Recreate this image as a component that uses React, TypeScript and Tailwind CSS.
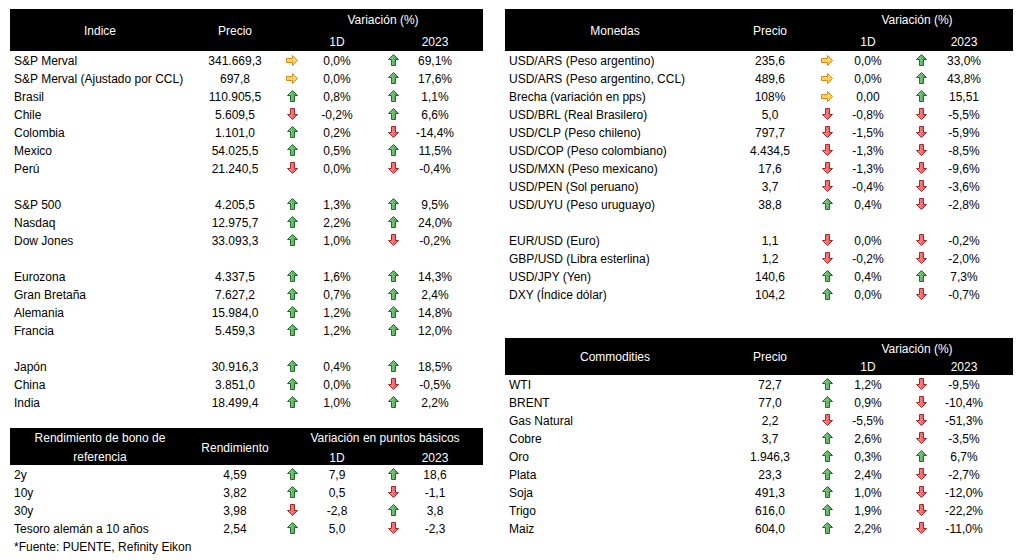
import React from 'react';

type Dir = 'up' | 'down' | 'flat';
type Row = [string, string, Dir, string, Dir, string] | null;

const LEFT_COLS = 'grid-cols-[180px_90px_24px_66px_46px_38px_29px]';
const RIGHT_COLS = 'grid-cols-[220px_90px_24px_58px_48px_38px_30px]';

const indices: Row[] = [
  ['S&P Merval', '341.669,3', 'flat', '0,0%', 'up', '69,1%'],
  ['S&P Merval (Ajustado por CCL)', '697,8', 'flat', '0,0%', 'up', '17,6%'],
  ['Brasil', '110.905,5', 'up', '0,8%', 'up', '1,1%'],
  ['Chile', '5.609,5', 'down', '-0,2%', 'up', '6,6%'],
  ['Colombia', '1.101,0', 'up', '0,2%', 'down', '-14,4%'],
  ['Mexico', '54.025,5', 'up', '0,5%', 'up', '11,5%'],
  ['Perú', '21.240,5', 'down', '0,0%', 'down', '-0,4%'],
  null,
  ['S&P 500', '4.205,5', 'up', '1,3%', 'up', '9,5%'],
  ['Nasdaq', '12.975,7', 'up', '2,2%', 'up', '24,0%'],
  ['Dow Jones', '33.093,3', 'up', '1,0%', 'down', '-0,2%'],
  null,
  ['Eurozona', '4.337,5', 'up', '1,6%', 'up', '14,3%'],
  ['Gran Bretaña', '7.627,2', 'up', '0,7%', 'up', '2,4%'],
  ['Alemania', '15.984,0', 'up', '1,2%', 'up', '14,8%'],
  ['Francia', '5.459,3', 'up', '1,2%', 'up', '12,0%'],
  null,
  ['Japón', '30.916,3', 'up', '0,4%', 'up', '18,5%'],
  ['China', '3.851,0', 'up', '0,0%', 'down', '-0,5%'],
  ['India', '18.499,4', 'up', '1,0%', 'up', '2,2%'],
];

const bonos: Row[] = [
  ['2y', '4,59', 'up', '7,9', 'up', '18,6'],
  ['10y', '3,82', 'up', '0,5', 'down', '-1,1'],
  ['30y', '3,98', 'down', '-2,8', 'up', '3,8'],
  ['Tesoro alemán a 10 años', '2,54', 'up', '5,0', 'down', '-2,3'],
];

const monedas: Row[] = [
  ['USD/ARS (Peso argentino)', '235,6', 'flat', '0,0%', 'up', '33,0%'],
  ['USD/ARS (Peso argentino, CCL)', '489,6', 'flat', '0,0%', 'up', '43,8%'],
  ['Brecha (variación en pps)', '108%', 'flat', '0,00', 'up', '15,51'],
  ['USD/BRL (Real Brasilero)', '5,0', 'down', '-0,8%', 'down', '-5,5%'],
  ['USD/CLP (Peso chileno)', '797,7', 'down', '-1,5%', 'down', '-5,9%'],
  ['USD/COP (Peso colombiano)', '4.434,5', 'down', '-1,3%', 'down', '-8,5%'],
  ['USD/MXN (Peso mexicano)', '17,6', 'down', '-1,3%', 'down', '-9,6%'],
  ['USD/PEN (Sol peruano)', '3,7', 'down', '-0,4%', 'down', '-3,6%'],
  ['USD/UYU (Peso uruguayo)', '38,8', 'up', '0,4%', 'down', '-2,8%'],
  null,
  ['EUR/USD (Euro)', '1,1', 'down', '0,0%', 'down', '-0,2%'],
  ['GBP/USD (Libra esterlina)', '1,2', 'down', '-0,2%', 'down', '-2,0%'],
  ['USD/JPY (Yen)', '140,6', 'up', '0,4%', 'up', '7,3%'],
  ['DXY (Índice dólar)', '104,2', 'up', '0,0%', 'down', '-0,7%'],
];

const commodities: Row[] = [
  ['WTI', '72,7', 'up', '1,2%', 'down', '-9,5%'],
  ['BRENT', '77,0', 'up', '0,9%', 'down', '-10,4%'],
  ['Gas Natural', '2,2', 'down', '-5,5%', 'down', '-51,3%'],
  ['Cobre', '3,7', 'up', '2,6%', 'down', '-3,5%'],
  ['Oro', '1.946,3', 'up', '0,3%', 'up', '6,7%'],
  ['Plata', '23,3', 'up', '2,4%', 'down', '-2,7%'],
  ['Soja', '491,3', 'up', '1,0%', 'down', '-12,0%'],
  ['Trigo', '616,0', 'up', '1,9%', 'down', '-22,2%'],
  ['Maiz', '604,0', 'up', '2,2%', 'down', '-11,0%'],
];

// Excel-style icon set arrows
const Arrow: React.FC<{ dir: Dir }> = ({ dir }) => {
  if (dir === 'flat') {
    return (
      <svg width="12" height="11" viewBox="0 0 12 11">
        <defs>
          <linearGradient id="gy" x1="0" y1="0" x2="0" y2="1">
            <stop offset="0" stopColor="#ffe98a" />
            <stop offset="1" stopColor="#f7c23c" />
          </linearGradient>
        </defs>
        <polygon points="0.5,3.5 6.5,3.5 6.5,0.5 11.5,5.5 6.5,10.5 6.5,7.5 0.5,7.5" fill="url(#gy)" stroke="#e3891a" strokeWidth="1" />
      </svg>
    );
  }
  const up = dir === 'up';
  return (
    <svg width="11" height="12" viewBox="0 0 11 12">
      <defs>
        <linearGradient id="gg" x1="0" y1="0" x2="1" y2="0">
          <stop offset="0" stopColor="#8fdc8f" />
          <stop offset="1" stopColor="#3c9c4a" />
        </linearGradient>
        <linearGradient id="gr" x1="0" y1="0" x2="1" y2="0">
          <stop offset="0" stopColor="#ff9a9a" />
          <stop offset="1" stopColor="#e24a4a" />
        </linearGradient>
      </defs>
      {up ? (
        <polygon points="5.5,0.5 10.5,5.5 7.5,5.5 7.5,11.5 3.5,11.5 3.5,5.5 0.5,5.5" fill="url(#gg)" stroke="#236b2c" strokeWidth="1" />
      ) : (
        <polygon points="3.5,0.5 7.5,0.5 7.5,6.5 10.5,6.5 5.5,11.5 0.5,6.5 3.5,6.5" fill="url(#gr)" stroke="#a82828" strokeWidth="1" />
      )}
    </svg>
  );
};

const DataRows: React.FC<{ rows: Row[]; cols: string }> = ({ rows, cols }) => (
  <>
    {rows.map((r, i) =>
      r === null ? (
        <div key={i} className="h-[18px]" />
      ) : (
        <div key={i} className={`grid ${cols} h-[18px] items-center pt-[2px]`}>
          <div className="pl-[4px] whitespace-nowrap">{r[0]}</div>
          <div className="flex justify-center">{r[1]}</div>
          <div className="flex justify-center -mt-[2px]"><Arrow dir={r[2]} /></div>
          <div className="flex justify-center">{r[3]}</div>
          <div className="flex justify-center -mt-[2px]"><Arrow dir={r[4]} /></div>
          <div className="flex justify-center whitespace-nowrap">{r[5]}</div>
          <div />
        </div>
      )
    )}
  </>
);

export default function App() {
  return (
    <div
      className="w-[1023px] h-[560px] bg-white text-black text-[12px] leading-none flex gap-[22px] pl-[10px] pt-[9px] overflow-hidden"
      style={{ fontFamily: '"Liberation Sans", Arial, sans-serif' }}
    >
      {/* Left column */}
      <div className="w-[473px] flex flex-col">
        <div className={`grid ${LEFT_COLS} bg-black text-white h-[42px]`}>
          <div className="row-span-2 flex items-center justify-center pt-[1px]">Indice</div>
          <div className="row-span-2 flex items-center justify-center pt-[1px]">Precio</div>
          <div className="col-span-4 flex items-center justify-center pl-[32px] pt-[2px]">Variación (%)</div>
          <div className="row-span-2" />
          <div />
          <div className="flex items-center justify-center pt-[3px]">1D</div>
          <div />
          <div className="flex items-center justify-center pt-[3px]">2023</div>
        </div>
        <DataRows rows={indices} cols={LEFT_COLS} />

        <div className={`grid ${LEFT_COLS} bg-black text-white h-[37px] mt-[17px]`}>
          <div className="row-span-2 flex items-center justify-center text-center leading-[19px] px-[12px] pt-[1px]">
            Rendimiento de bono de referencia
          </div>
          <div className="row-span-2 flex items-center justify-center">Rendimiento</div>
          <div className="col-span-4 flex items-center justify-center pl-[36px] pt-[1px] whitespace-nowrap">Variación en puntos básicos</div>
          <div className="row-span-2" />
          <div />
          <div className="flex items-center justify-center pt-[1px]">1D</div>
          <div />
          <div className="flex items-center justify-center pt-[1px]">2023</div>
        </div>
        <DataRows rows={bonos} cols={LEFT_COLS} />
        <div className="h-[18px] flex items-center pl-[4px] pt-[2px]">*Fuente: PUENTE, Refinity Eikon</div>
      </div>

      {/* Right column */}
      <div className="w-[508px] flex flex-col">
        <div className={`grid ${RIGHT_COLS} bg-black text-white h-[42px]`}>
          <div className="row-span-2 flex items-center justify-center pt-[1px]">Monedas</div>
          <div className="row-span-2 flex items-center justify-center pt-[1px]">Precio</div>
          <div className="col-span-4 flex items-center justify-center pl-[36px] pt-[2px]">Variación (%)</div>
          <div className="row-span-2" />
          <div />
          <div className="flex items-center justify-center pt-[3px]">1D</div>
          <div />
          <div className="flex items-center justify-center pt-[3px]">2023</div>
        </div>
        <DataRows rows={monedas} cols={RIGHT_COLS} />

        <div className={`grid ${RIGHT_COLS} bg-black text-white h-[37px] mt-[35px]`}>
          <div className="row-span-2 flex items-center justify-center">Commodities</div>
          <div className="row-span-2 flex items-center justify-center">Precio</div>
          <div className="col-span-4 flex items-center justify-center pl-[36px] pt-[2px]">Variación (%)</div>
          <div className="row-span-2" />
          <div />
          <div className="flex items-center justify-center pt-[1px]">1D</div>
          <div />
          <div className="flex items-center justify-center pt-[1px]">2023</div>
        </div>
        <DataRows rows={commodities} cols={RIGHT_COLS} />
      </div>
    </div>
  );
}
